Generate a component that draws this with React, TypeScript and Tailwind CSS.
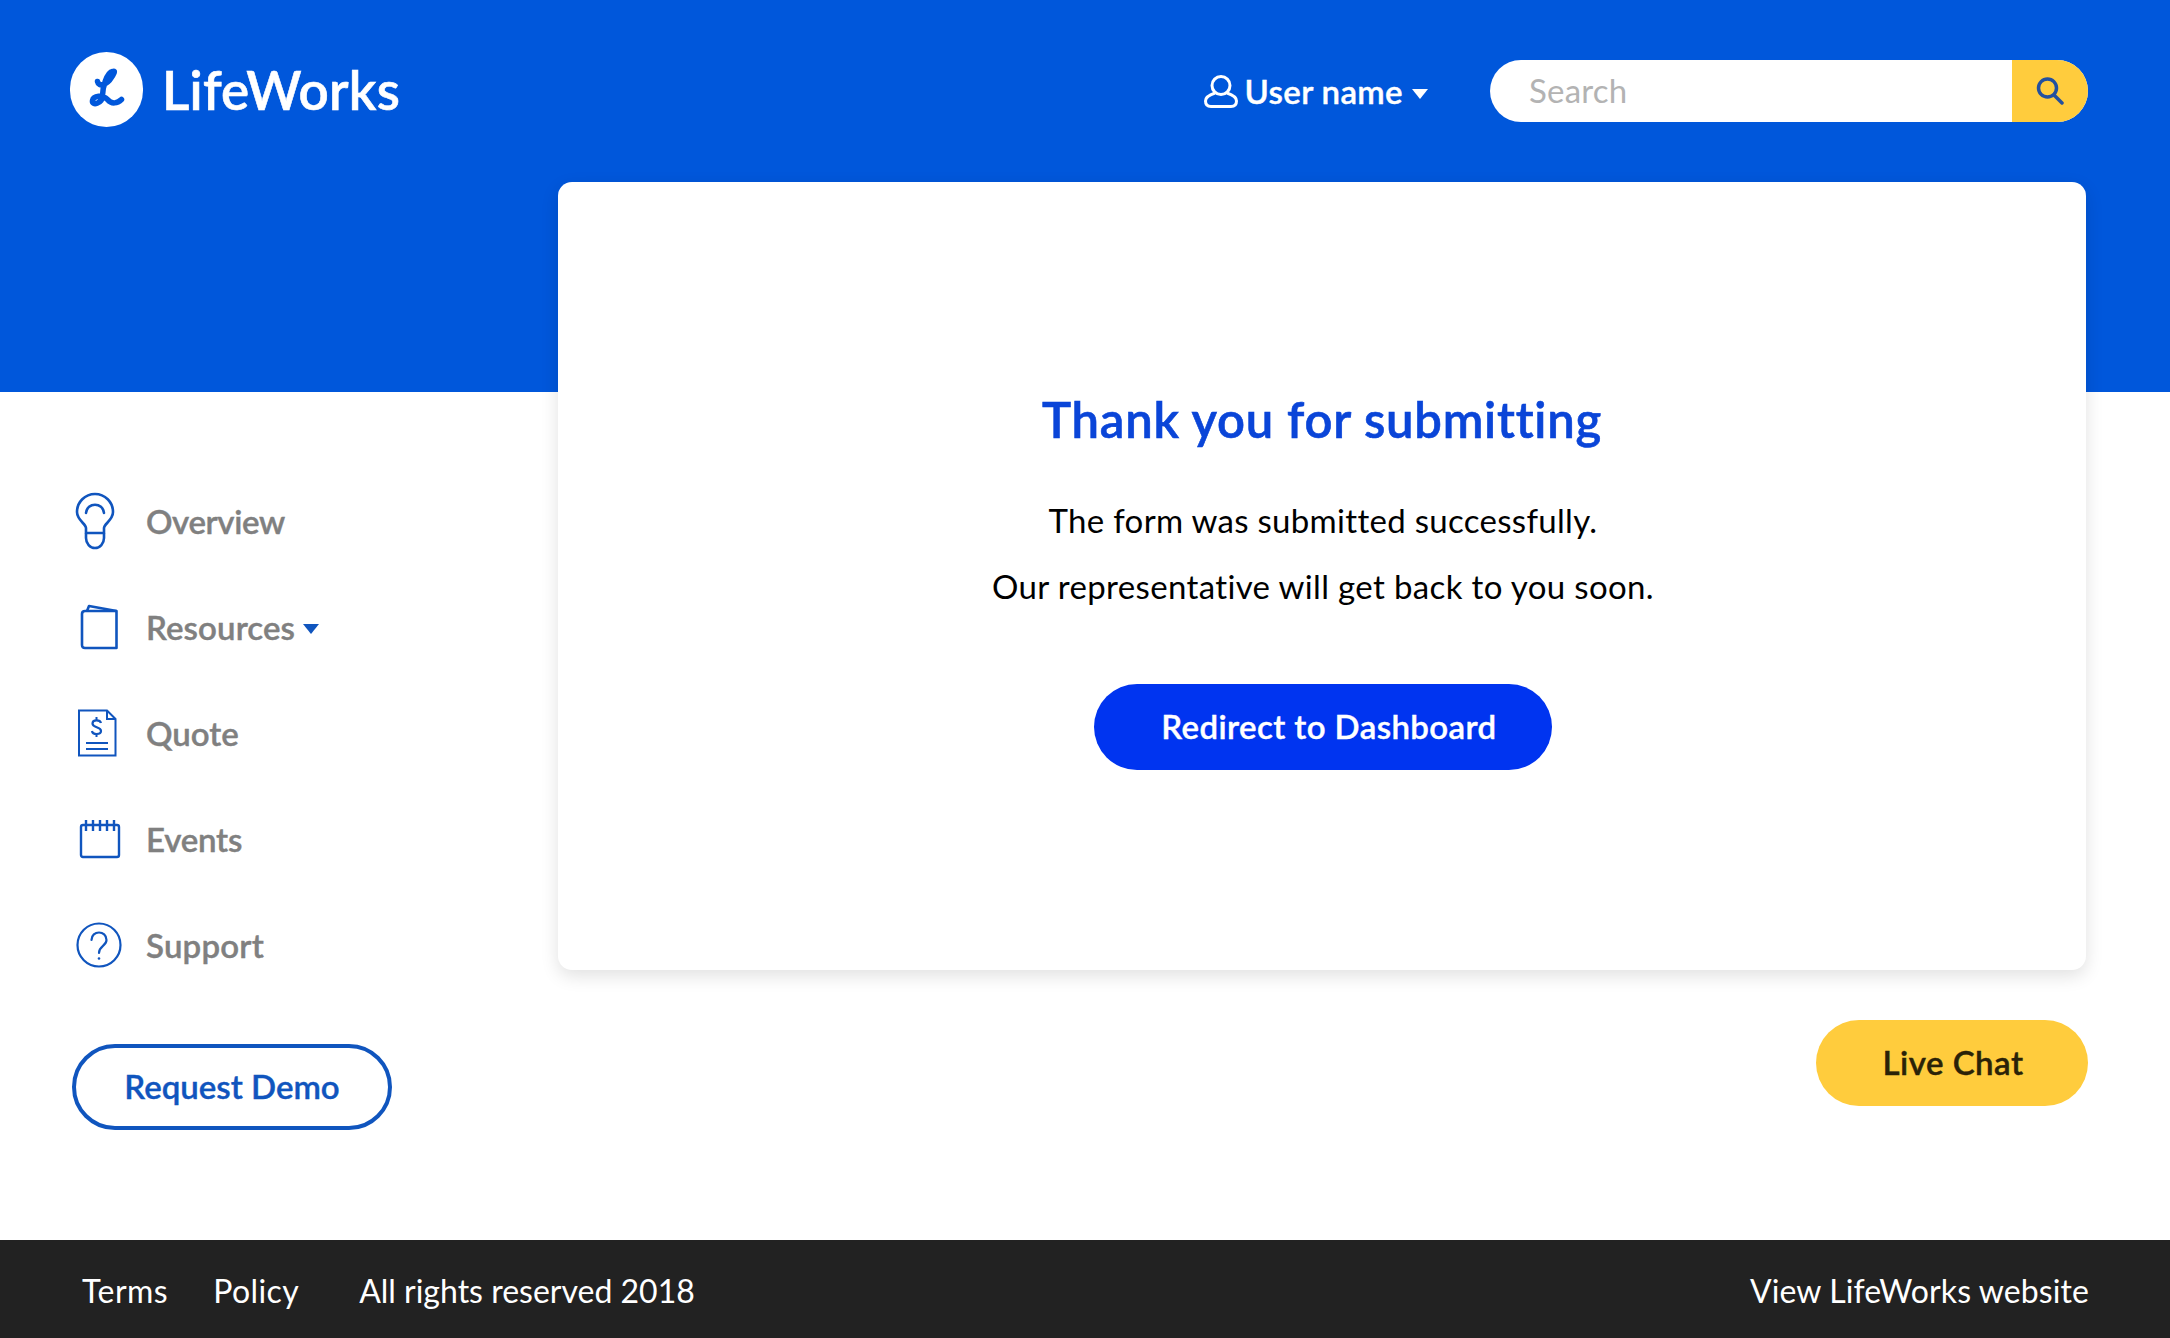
import React from "react";

const Bulb = () => (
  <svg width="40" height="58" viewBox="0 0 40 58" fill="none" stroke="#1055BE" strokeWidth="2.6" className="block">
    <path d="M11 41 V36 C11 32 2 28 2 20 A18 18 0 0 1 38 20 C38 28 29 32 29 36 V41 Z" strokeLinejoin="round" />
    <path d="M11 41 V46 A9 10 0 0 0 29 46 V41" />
    <path d="M11 21 C12 10 28 10 29 21" strokeLinecap="round" />
  </svg>
);
const Folder = () => (
  <svg width="38" height="46" viewBox="0 0 38 46" fill="none" stroke="#1055BE" strokeWidth="2.6" strokeLinejoin="round" className="block">
    <path d="M2 10 Q2 7 5 7 H36.500 V44 H5 Q2 44 2 41 Z" />
    <path d="M7 7 L9 2 L36.500 7" />
  </svg>
);
const Doc = () => (
  <svg width="40" height="48" viewBox="0 0 40 48" fill="none" stroke="#1055BE" strokeWidth="2" className="block">
    <path d="M2 1.500 H30 L38.500 10 V46.500 H2 Z" />
    <path d="M30 1.500 V10 H38.500" />
    <path d="M24 14 C23 10.500 15.500 10.500 15.500 14.500 C15.500 19 24 17.500 24 22 C24 26 15.500 26 15 22" strokeWidth="2.200" />
    <path d="M19.500 8 V11 M19.500 25 V28" />
    <path d="M9 34 H31 M9 40 H31" />
  </svg>
);
const Calendar = () => (
  <svg width="42" height="40" viewBox="0 0 42 40" fill="none" stroke="#1055BE" strokeWidth="2.400" className="block">
    <path d="M2 8 Q2 6 4 6 H38 Q40 6 40 8 V36 Q40 38 38 38 H4 Q2 38 2 36 Z" strokeLinejoin="round" />
    <path d="M7 1 V12 M14 1 V12 M21 1 V12 M28 1 V12 M35 1 V12" />
  </svg>
);
const Help = () => (
  <svg width="46" height="46" viewBox="0 0 46 46" fill="none" stroke="#1055BE" strokeWidth="2.200" className="block">
    <circle cx="23" cy="23" r="21.500" />
    <path d="M15.500 18 C15.500 8 30.500 8 30.500 18 C30.500 24 23 24 23 31" strokeLinecap="round" />
    <circle cx="23" cy="36.500" r="1.300" fill="#1055BE" stroke="none" />
  </svg>
);

const nav = [
  { label: "Overview", icon: <Bulb />, caret: false, shift: "ml-[2px]", track: "tracking-[-0.4px]" },
  { label: "Resources", icon: <Folder />, caret: true, shift: "ml-[7px]", track: "tracking-[0.1px]" },
  { label: "Quote", icon: <Doc />, caret: false, shift: "ml-[4px]", track: "tracking-[0px]" },
  { label: "Events", icon: <Calendar />, caret: false, shift: "ml-[6px]", track: "tracking-[-0.2px]" },
  { label: "Support", icon: <Help />, caret: false, shift: "ml-[3px]", track: "tracking-[0.2px]" },
];

export default function App() {
  return (
    <div className="flex min-h-[1338px] flex-col bg-white font-['Lato','Liberation_Sans',sans-serif]">
      <header className="flex h-[392px] items-start justify-between bg-[#0057DB] pl-[70px] pr-[82px] pt-[52px]">
        <div className="flex items-center gap-[19px]">
          <div className="flex h-[75px] w-[73px] items-center justify-center rounded-full bg-white">
            <svg width="56" height="56" viewBox="-1.500 1.500 56 56" fill="none" stroke="#0057DB" strokeWidth="5.500" strokeLinecap="round" strokeLinejoin="round">
              <path d="M17 21 C18 27 27 24 31 17 C34 12 35 10 32 11 C26 12 22 28 22 35 C22 43 11 46 12 40 C13 35 22 34 27 39 C31 44 37 43 41 39" />
            </svg>
          </div>
          <span className="text-[53px] font-semibold leading-none tracking-[0.2px] text-white [-webkit-text-stroke:0.6px]">LifeWorks</span>
        </div>
        <div className="flex items-center pt-[8px]">
          <svg width="34" height="33" viewBox="0 0 34 33" fill="none" stroke="#fff" strokeWidth="3" strokeLinejoin="round">
            <circle cx="17" cy="10.500" r="9" />
            <path d="M11 18 C5 20 1.500 23 1.500 26 Q1.500 31.500 7 31.500 H27 Q32.500 31.500 32.500 26 C32.500 23 29 20 23 18" />
          </svg>
          <span className="ml-[7px] text-[33px] font-semibold leading-none tracking-[0.35px] text-white [-webkit-text-stroke:0.4px]">User name</span>
          <svg width="16" height="10" viewBox="0 0 16 10" className="ml-[9px] mt-[6px]"><path d="M0 0 H16 L8 10 Z" fill="#fff" /></svg>
          <div className="ml-[62px] flex h-[62px] w-[598px] overflow-hidden rounded-full bg-white">
            <div className="flex flex-1 items-center pl-[39px] text-[33px] tracking-[0.2px] text-[#b3b3b3]">Search</div>
            <div className="flex w-[76px] items-center justify-center bg-[#FFCC3D]">
              <svg width="28" height="28" viewBox="0 0 28 28" fill="none" stroke="#23509f" strokeWidth="3.500" strokeLinecap="round">
                <circle cx="11.500" cy="11" r="9" />
                <path d="M18 18 L26 26" />
              </svg>
            </div>
          </div>
        </div>
      </header>

      <main className="flex flex-1">
        <aside className="flex w-[558px] shrink-0 flex-col pl-[73px] pt-[76px]">
          <nav className="flex flex-col">
            {nav.map((n) => (
              <div key={n.label} className="flex h-[106px] items-center">
                <div className="flex w-[73px] shrink-0"><div className={n.shift}>{n.icon}</div></div>
                <span className={`${n.track} text-[33px] font-semibold leading-none text-[#808080] [-webkit-text-stroke:0.4px]`}>{n.label}</span>
                {n.caret && (
                  <svg width="16" height="10" viewBox="0 0 16 10" className="ml-[8px] mt-[4px]"><path d="M0 0 H16 L8 10 Z" fill="#1055BE" /></svg>
                )}
              </div>
            ))}
          </nav>
          <button className="-ml-[1px] mt-[46px] h-[86px] w-[320px] rounded-full border-4 border-[#1055BE] text-[33px] font-semibold text-[#1055BE] [-webkit-text-stroke:0.4px]">
            Request Demo
          </button>
        </aside>

        <div className="-mt-[210px] flex flex-1 flex-col items-end pr-[84px]">
          <section className="flex h-[788px] w-[1528px] flex-col items-center rounded-[14px] bg-white pt-[213px] shadow-[0_6px_18px_rgba(0,0,0,0.12)]">
            <h1 className="text-[49px] font-semibold leading-none tracking-[0.75px] text-[#0A45D8] [-webkit-text-stroke:0.6px]">Thank you for submitting</h1>
            <p className="ml-[2px] mt-[60px] text-[33px] leading-none tracking-[0.3px] text-black">The form was submitted successfully.</p>
            <p className="ml-[2px] mt-[33px] text-[33px] leading-none tracking-[0.35px] text-black">Our representative will get back to you soon.</p>
            <button className="ml-[1px] mt-[81px] h-[86px] w-[458px] rounded-full bg-[#0034F0] pl-[13px] text-[33px] font-semibold tracking-[0.4px] text-white [-webkit-text-stroke:0.4px]">
              Redirect to Dashboard
            </button>
          </section>
          <button className="mr-[-2px] mt-[50px] h-[86px] w-[272px] rounded-full bg-[#FFCC3D] pl-[2px] text-[33px] font-semibold tracking-[0.5px] text-[#2a2208] [-webkit-text-stroke:0.4px]">
            Live Chat
          </button>
        </div>
      </main>

      <footer className="flex h-[98px] items-center justify-between bg-[#222222] pl-[82px] pr-[81px] pt-[3px] text-[32px] leading-none text-white">
        <div className="flex">
          <span className="tracking-[0.5px]">Terms</span>
          <span className="ml-[45px] tracking-[0.4px]">Policy</span>
          <span className="ml-[60px]">All rights reserved 2018</span>
        </div>
        <span className="tracking-[0.1px]">View LifeWorks website</span>
      </footer>
    </div>
  );
}
